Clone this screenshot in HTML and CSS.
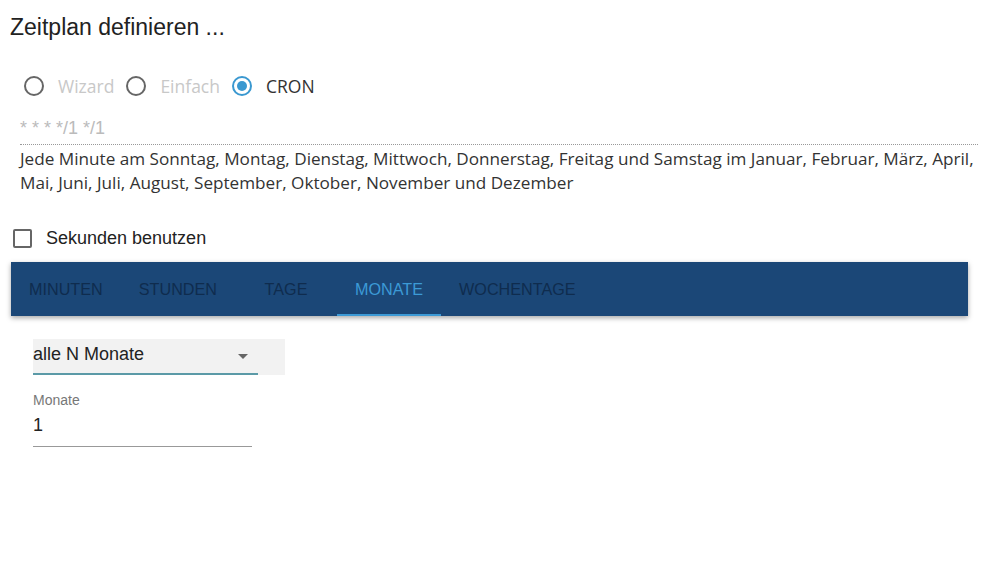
FILE: index.html
```html
<!DOCTYPE html>
<html lang="de">
<head>
    <meta charset="UTF-8">
    <meta name="viewport" content="width=device-width, initial-scale=1.0">
    <title>Zeitplan definieren</title>
    <link rel="stylesheet" href="styles.css">
</head>
<body>
    <h1 class="title">Zeitplan definieren ...</h1>

    <div class="modes">
        <label class="mode disabled"><span class="radio"></span>Wizard</label>
        <label class="mode disabled"><span class="radio"></span>Einfach</label>
        <label class="mode"><span class="radio checked"></span>CRON</label>
    </div>

    <div class="cron">* * * */1 */1</div>
    <p class="description">Jede Minute am Sonntag, Montag, Dienstag, Mittwoch, Donnerstag, Freitag und Samstag im Januar, Februar, März, April, Mai, Juni, Juli, August, September, Oktober, November und Dezember</p>

    <label class="seconds"><span class="checkbox"></span>Sekunden benutzen</label>

    <div class="tabs">
        <div class="tab">Minuten</div>
        <div class="tab">Stunden</div>
        <div class="tab">Tage</div>
        <div class="tab active">Monate</div>
        <div class="tab">Wochentage</div>
    </div>

    <div class="panel">
        <div class="select-box">
            <div class="select">
                <span>alle N Monate</span>
                <span class="arrow"></span>
            </div>
        </div>
        <div class="field">
            <div class="field-label">Monate</div>
            <div class="field-value">1</div>
        </div>
    </div>
</body>
</html>
```

FILE: styles.css
```css
body {
    margin: 0;
    font-family: "Liberation Sans", Arial, sans-serif;
    color: #222;
    background: #fff;
}
.title {
    margin: 14px 0 0 10px;
    font-size: 23px;
    font-weight: normal;
    line-height: 26px;
    color: #222;
}
.modes {
    display: flex;
    margin: 34px 0 0 24px;
    font-family: "Open Sans", sans-serif;
    font-size: 17.5px;
    line-height: 24px;
}
.mode {
    display: flex;
    align-items: center;
    margin-right: 12px;
    color: #333;
}
.mode.disabled {
    color: #c8c8c8;
}
.radio {
    width: 16px;
    height: 16px;
    border: 2px solid #666;
    border-radius: 50%;
    margin-right: 14px;
    position: relative;
}
.radio.checked {
    border-color: #3a98d0;
}
.radio.checked::after {
    content: "";
    position: absolute;
    left: 3px;
    top: 3px;
    width: 10px;
    height: 10px;
    border-radius: 50%;
    background: #3a98d0;
}
.cron {
    margin: 20px 3px 0 20px;
    padding-bottom: 5px;
    border-bottom: 1px dotted #999;
    font-size: 18px;
    line-height: 21px;
    color: #bbb;
}
.description {
    margin: 2px 3px 0 20px;
    font-family: "Open Sans", sans-serif;
    font-size: 17.15px;
    line-height: 24px;
    color: #333;
}
.seconds {
    display: flex;
    align-items: center;
    margin: 33px 0 0 13px;
    font-size: 18px;
    line-height: 20px;
    color: #222;
}
.checkbox {
    width: 15px;
    height: 15px;
    border: 2px solid #666;
    border-radius: 2px;
    margin-right: 14px;
}
.tabs {
    display: flex;
    height: 54px;
    margin: 14px 13px 0 11px;
    background: #1b4777;
    box-shadow: 0 2px 5px rgba(0, 0, 0, 0.35);
}
.tab {
    box-sizing: border-box;
    min-width: 102px;
    padding: 0 18px;
    display: flex;
    align-items: center;
    justify-content: center;
    font-size: 16.2px;
    text-transform: uppercase;
    color: #0f2c4e;
}
.tab.active {
    color: #3c9ad6;
    border-bottom: 2px solid #3c9ad6;
    padding-top: 2px;
}
.panel {
    padding: 23px 0 0 33px;
}
.select-box {
    width: 252px;
    height: 36px;
    background: #f2f2f2;
}
.select {
    box-sizing: border-box;
    width: 225px;
    height: 36px;
    display: flex;
    align-items: center;
    justify-content: space-between;
    padding-right: 10px;
    padding-bottom: 3px;
    border-bottom: 2px solid #5b9aa7;
    font-size: 18px;
    color: #222;
}
.arrow {
    width: 0;
    height: 0;
    border-left: 5px solid transparent;
    border-right: 5px solid transparent;
    border-top: 5px solid #666;
    margin-top: 3px;
}
.field {
    width: 219px;
    margin-top: 17px;
    border-bottom: 1px solid #999;
}
.field-label {
    font-size: 14px;
    line-height: 16px;
    color: #777;
}
.field-value {
    font-size: 18px;
    line-height: 22px;
    padding: 6px 0 10px;
    color: #222;
}
```
